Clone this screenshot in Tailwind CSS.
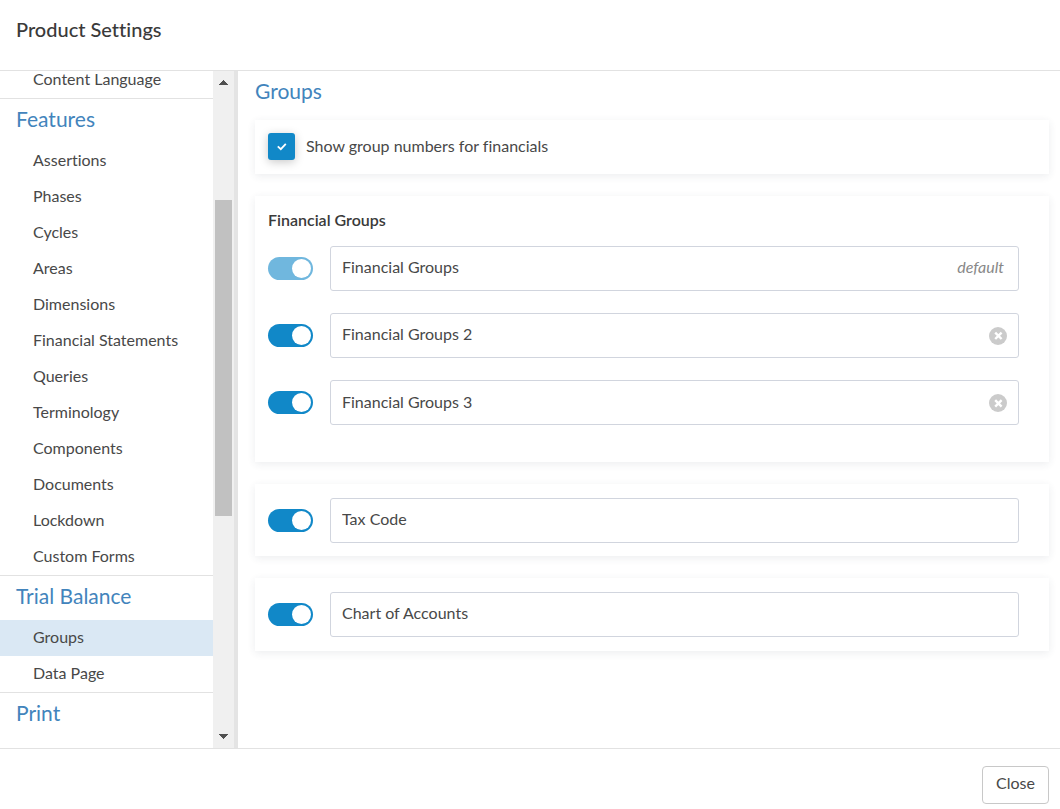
<!DOCTYPE html>
<html lang="en">
<head>
<meta charset="utf-8">
<title>Product Settings</title>
<script src="https://cdn.jsdelivr.net/npm/@tailwindcss/browser@4"></script>
</head>
<body class="flex h-screen flex-col overflow-hidden bg-white font-['Lato',sans-serif] text-base text-[#484848] [font-variant-ligatures:none]">
<header class="flex h-[71px] shrink-0 items-start border-b border-[#e2e2e2] px-4 pt-4">
  <h1 class="text-xl leading-[26px] font-medium text-[#3a3a3a]">Product Settings</h1>
</header>
<div class="flex min-h-0 flex-1">
  <aside class="flex w-[238px] shrink-0 border-r-4 border-[#e4e4e4]">
    <nav class="min-w-0 flex-1 overflow-hidden" aria-label="Settings">
      <a href="#" class="block h-[27px] pl-[33px] leading-4">Content Language</a>
      <h2 class="h-[45px] border-t border-[#e2e2e2] pl-4 text-[21px] leading-[39px] text-[#4284bc]">Features</h2>
      <a href="#" class="block h-9 pl-[33px] leading-[34px]">Assertions</a>
      <a href="#" class="block h-9 pl-[33px] leading-[34px]">Phases</a>
      <a href="#" class="block h-9 pl-[33px] leading-[34px]">Cycles</a>
      <a href="#" class="block h-9 pl-[33px] leading-[34px]">Areas</a>
      <a href="#" class="block h-9 pl-[33px] leading-[34px]">Dimensions</a>
      <a href="#" class="block h-9 pl-[33px] leading-[34px]">Financial Statements</a>
      <a href="#" class="block h-9 pl-[33px] leading-[34px]">Queries</a>
      <a href="#" class="block h-9 pl-[33px] leading-[34px]">Terminology</a>
      <a href="#" class="block h-9 pl-[33px] leading-[34px]">Components</a>
      <a href="#" class="block h-9 pl-[33px] leading-[34px]">Documents</a>
      <a href="#" class="block h-9 pl-[33px] leading-[34px]">Lockdown</a>
      <a href="#" class="block h-9 pl-[33px] leading-[34px]">Custom Forms</a>
      <h2 class="h-[45px] border-t border-[#e2e2e2] pl-4 text-[21px] leading-[39px] text-[#4284bc]">Trial Balance</h2>
      <a href="#" aria-current="page" class="block h-9 bg-[#dae8f4] pl-[33px] leading-[34px]">Groups</a>
      <a href="#" class="block h-9 pl-[33px] leading-[34px]">Data Page</a>
      <h2 class="h-[45px] border-t border-[#e2e2e2] pl-4 text-[21px] leading-[39px] text-[#4284bc]">Print</h2>
    </nav>
    <div class="flex w-[21px] shrink-0 flex-col items-center justify-between bg-[#f0f0f0] py-[9px]" aria-hidden="true">
      <svg class="h-[5px] w-[9px]" viewBox="0 0 9 5" fill="#505050" shape-rendering="crispEdges"><path d="M4 0h1v1h1v1h1v1h1v1h1v1H0V4h1V3h1V2h1V1h1z"/></svg>
      <div class="flex w-full flex-1 flex-col px-[2px] pt-[115px]"><div class="h-[316px] bg-[#c1c1c1]"></div></div>
      <svg class="h-[5px] w-[9px]" viewBox="0 0 9 5" fill="#505050" shape-rendering="crispEdges"><path d="M0 0h9v1H8v1H7v1H6v1H5v1H4V4H3V3H2V2H1V1H0z"/></svg>
    </div>
  </aside>
  <main class="flex min-w-0 flex-1 flex-col gap-[22px] overflow-hidden pr-[11px] pl-[17px]">
    <h2 class="-mb-[22px] h-[49px] text-[21px] leading-[39px] text-[#4284bc]">Groups</h2>
    <section class="flex h-[54px] shrink-0 items-start bg-white px-[13px] pt-[13px] shadow-[0_2px_8px_rgba(40,50,80,0.09)]">
      <label class="flex gap-[11px]">
        <span class="grid size-[27px]">
          <input type="checkbox" checked class="col-start-1 row-start-1 size-[27px] appearance-none rounded-[3px] bg-[#1188c8] shadow-[0_2px_10px_rgba(0,0,0,0.22)]">
          <svg class="pointer-events-none z-10 col-start-1 row-start-1 size-[27px]" viewBox="0 0 27 27" fill="none" stroke="#fff" stroke-width="1.8"><path d="M9.8 13.4l3 2.8 5-5.4"/></svg>
        </span>
        <span class="leading-[26px]">Show group numbers for financials</span>
      </label>
    </section>
    <section class="shrink-0 bg-white pt-3 pr-[30px] pb-[37px] pl-[13px] shadow-[0_2px_8px_rgba(40,50,80,0.09)]">
      <h3 class="mb-[14px] leading-6 font-semibold text-[#3a3a3a]">Financial Groups</h3>
      <div class="flex flex-col gap-[22px]">
        <div class="flex items-center gap-[17px]">
          <input type="checkbox" role="switch" checked disabled aria-label="Enable Financial Groups" class="flex h-[23px] w-[45px] shrink-0 appearance-none items-center justify-end rounded-full bg-[#70b7de] pr-[2px] before:size-[19px] before:rounded-full before:bg-white before:content-['']">
          <div class="flex h-[45px] min-w-0 flex-1 items-center rounded-[3px] border border-[#d1d5de] pr-[14px] pl-[11px]">
            <input type="text" value="Financial Groups" aria-label="Group 1 name" class="h-[43px] min-w-0 flex-1 pb-[4px] outline-none">
            <span class="pb-[3px] text-[#888] italic">default</span>
          </div>
        </div>
        <div class="flex items-center gap-[17px]">
          <input type="checkbox" role="switch" checked aria-label="Enable Financial Groups 2" class="flex h-[23px] w-[45px] shrink-0 appearance-none items-center justify-end rounded-full bg-[#1188c8] pr-[2px] before:size-[19px] before:rounded-full before:bg-white before:content-['']">
          <div class="flex h-[45px] min-w-0 flex-1 items-center rounded-[3px] border border-[#d1d5de] pr-[11px] pl-[11px]">
            <input type="text" value="Financial Groups 2" aria-label="Group 2 name" class="h-[43px] min-w-0 flex-1 pb-[4px] outline-none">
            <button type="button" aria-label="Remove Financial Groups 2"><svg class="size-[18px]" viewBox="0 0 18 18"><circle cx="9" cy="9" r="9" fill="#cbcbcb"/><path d="M6.2 5.6l6.4 6.4M12.6 5.6L6.2 12" stroke="#fff" stroke-width="2.4"/></svg></button>
          </div>
        </div>
        <div class="flex items-center gap-[17px]">
          <input type="checkbox" role="switch" checked aria-label="Enable Financial Groups 3" class="flex h-[23px] w-[45px] shrink-0 appearance-none items-center justify-end rounded-full bg-[#1188c8] pr-[2px] before:size-[19px] before:rounded-full before:bg-white before:content-['']">
          <div class="flex h-[45px] min-w-0 flex-1 items-center rounded-[3px] border border-[#d1d5de] pr-[11px] pl-[11px]">
            <input type="text" value="Financial Groups 3" aria-label="Group 3 name" class="h-[43px] min-w-0 flex-1 pb-[2px] outline-none">
            <button type="button" aria-label="Remove Financial Groups 3"><svg class="size-[18px]" viewBox="0 0 18 18"><circle cx="9" cy="9" r="9" fill="#cbcbcb"/><path d="M6.2 6.2l6.4 6.4M12.6 6.2l-6.4 6.4" stroke="#fff" stroke-width="2.4"/></svg></button>
          </div>
        </div>
      </div>
    </section>
    <section class="flex shrink-0 items-center gap-[17px] bg-white pt-[14px] pr-[30px] pb-[13px] pl-[13px] shadow-[0_2px_8px_rgba(40,50,80,0.09)]">
      <input type="checkbox" role="switch" checked aria-label="Enable Tax Code" class="flex h-[23px] w-[45px] shrink-0 appearance-none items-center justify-end rounded-full bg-[#1188c8] pr-[2px] before:size-[19px] before:rounded-full before:bg-white before:content-['']">
      <input type="text" value="Tax Code" aria-label="Tax Code name" class="h-[45px] min-w-0 flex-1 rounded-[3px] border border-[#d1d5de] px-[11px] pb-[4px] outline-none">
    </section>
    <section class="flex shrink-0 items-center gap-[17px] bg-white pt-[14px] pr-[30px] pb-[14px] pl-[13px] shadow-[0_2px_8px_rgba(40,50,80,0.09)]">
      <input type="checkbox" role="switch" checked aria-label="Enable Chart of Accounts" class="flex h-[23px] w-[45px] shrink-0 appearance-none items-center justify-end rounded-full bg-[#1188c8] pr-[2px] before:size-[19px] before:rounded-full before:bg-white before:content-['']">
      <input type="text" value="Chart of Accounts" aria-label="Chart of Accounts name" class="h-[45px] min-w-0 flex-1 rounded-[3px] border border-[#d1d5de] px-[11px] pb-[4px] outline-none">
    </section>
  </main>
</div>
<footer class="flex h-[61px] shrink-0 items-start justify-end border-t border-[#e2e2e2] pt-[17px] pr-[11px]">
  <button type="button" class="h-[38px] rounded-[4px] border border-[#c8c8c8] bg-white px-[13px] pb-1">Close</button>
</footer>
</body>
</html>
